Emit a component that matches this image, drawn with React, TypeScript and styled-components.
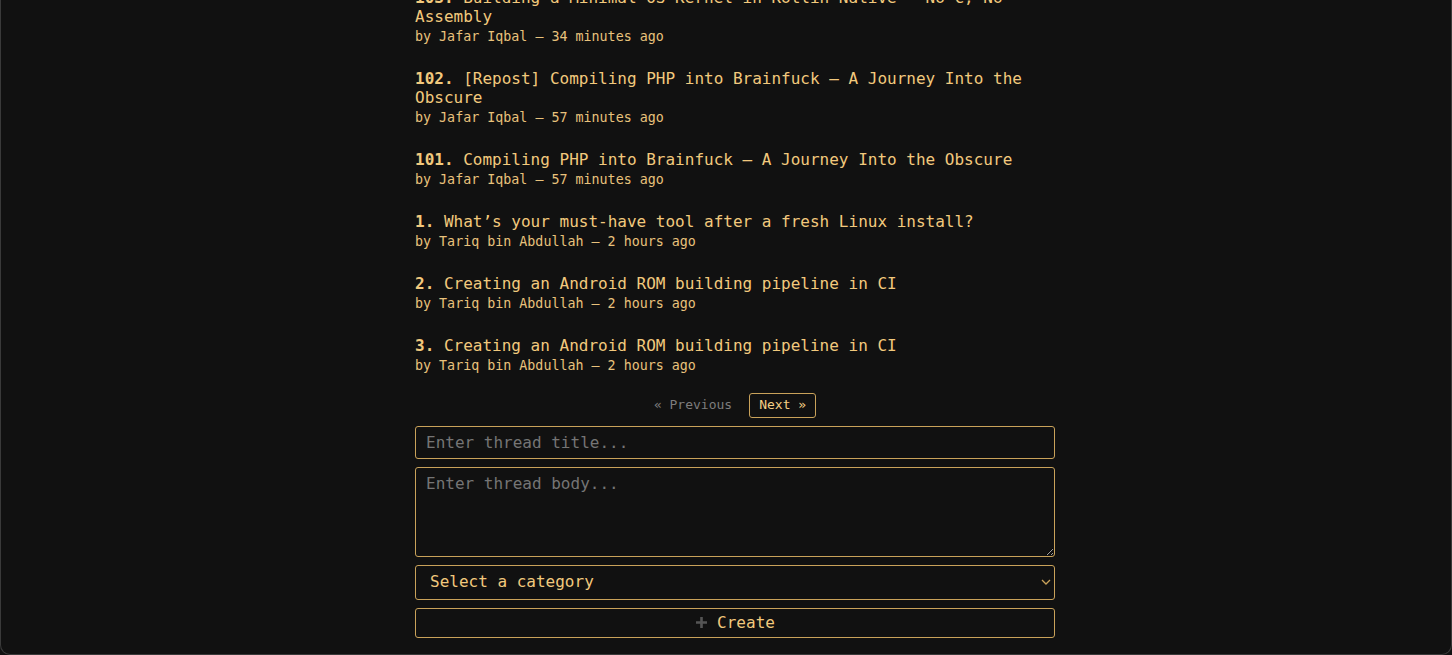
import styled, { createGlobalStyle } from 'styled-components';

const GlobalStyle = createGlobalStyle`
    html, body {
        margin:0;
        padding:0;
        background:#111111;
        color-scheme:dark;
    }
    body {
        font-family:"DejaVu Sans Mono", "Liberation Mono", monospace;
        overflow:hidden;
    }
`;

const Colors = {
    bg: '#111111',
    gold: '#f2c97d',
    meta: '#e9c27c',
    border: '#c9a25a',
    muted: '#7d7d7d',
    frame: '#3a3a3a',
};

const Frame = styled.div`
    box-sizing:border-box;
    height:655px;
    overflow:hidden;
    border:1px solid ${Colors.frame};
    border-top:none;
    border-radius:0 0 10px 10px;
    padding-left:18px;
    display:flex;
    justify-content:center;
`;

const Column = styled.main`
    width:640px;
    margin-top:-12px;
    display:flex;
    flex-direction:column;
`;

const ThreadList = styled.ul`
    list-style:none;
    margin:0;
    padding:0;
    display:flex;
    flex-direction:column;
    gap:24.4px;
`;

const Thread = styled.li`
    display:flex;
    flex-direction:column;
`;

const Title = styled.a`
    font-size:16px;
    line-height:19.2px;
    color:${Colors.gold};
    text-decoration:none;

    b{
        font-weight:bold;
    }
`;

const Meta = styled.span`
    margin-top:2.4px;
    font-size:13.33px;
    line-height:16px;
    color:${Colors.meta};
`;

const Pager = styled.nav`
    margin-top:19px;
    display:flex;
    justify-content:center;
    align-items:center;
    gap:17px;
    font-size:13px;
`;

const PagerLink = styled.span<{ $active?: boolean }>`
    line-height:15.6px;
    padding:${p => p.$active ? '3.5px 9px' : '4px 0'};
    border-radius:3px;
    border:${p => p.$active ? `1px solid ${Colors.border}` : 'none'};
    color:${p => p.$active ? '#f5cf86' : Colors.muted};
`;

const Form = styled.form`
    margin-top:8px;
    display:flex;
    flex-direction:column;
    gap:8px;
`;

const fieldBase = `
    box-sizing:border-box;
    width:100%;
    margin:0;
    background:#111111;
    border:1px solid ${Colors.border};
    border-radius:3px;
    font-family:"DejaVu Sans Mono", "Liberation Mono", monospace;
    font-size:16px;
    line-height:19.2px;
    color:${Colors.gold};
    outline:none;

    ::placeholder{
        color:${Colors.muted};
    }
`;

const TitleInput = styled.input`
    ${fieldBase}
    height:33px;
    padding:6px 10px;
`;

const BodyInput = styled.textarea`
    ${fieldBase}
    display:block;
    height:90px;
    padding:6px 10px;
    resize:vertical;
`;

const SelectWrap = styled.div`
    position:relative;
`;

const CategorySelect = styled.select`
    ${fieldBase}
    height:35px;
    padding:0 14px;
    appearance:none;
    -webkit-appearance:none;
`;

const Chevron = styled.svg`
    position:absolute;
    right:4px;
    top:13px;
    pointer-events:none;
`;

const CreateButton = styled.button`
    ${fieldBase}
    height:30px;
    padding:0;
    display:flex;
    justify-content:center;
    align-items:center;
    gap:9px;
    cursor:pointer;
`;

const threads = [
    { id: 103, title: 'Building a Minimal OS Kernel in Kotlin Native — No C, No Assembly', author: 'Jafar Iqbal', ago: '34 minutes ago' },
    { id: 102, title: '[Repost] Compiling PHP into Brainfuck — A Journey Into the Obscure', author: 'Jafar Iqbal', ago: '57 minutes ago' },
    { id: 101, title: 'Compiling PHP into Brainfuck — A Journey Into the Obscure', author: 'Jafar Iqbal', ago: '57 minutes ago' },
    { id: 1, title: 'What’s your must-have tool after a fresh Linux install?', author: 'Tariq bin Abdullah', ago: '2 hours ago' },
    { id: 2, title: 'Creating an Android ROM building pipeline in CI', author: 'Tariq bin Abdullah', ago: '2 hours ago' },
    { id: 3, title: 'Creating an Android ROM building pipeline in CI', author: 'Tariq bin Abdullah', ago: '2 hours ago' },
];

export default function App() {
    return (
        <>
            <GlobalStyle />
            <Frame>
                <Column>
                    <ThreadList>
                        {threads.map(t => (
                            <Thread key={t.id}>
                                <Title href="#"><b>{t.id}.</b> {t.title}</Title>
                                <Meta>by {t.author} — {t.ago}</Meta>
                            </Thread>
                        ))}
                    </ThreadList>

                    <Pager>
                        <PagerLink>« Previous</PagerLink>
                        <PagerLink $active>Next »</PagerLink>
                    </Pager>

                    <Form onSubmit={e => e.preventDefault()}>
                        <TitleInput placeholder="Enter thread title..." />
                        <BodyInput placeholder="Enter thread body..." />
                        <SelectWrap>
                            <CategorySelect defaultValue="">
                                <option value="">Select a category</option>
                            </CategorySelect>
                            <Chevron width="10" height="8" viewBox="0 0 10 8" fill="none">
                                <path d="M1 2 L5 6 L9 2" stroke={Colors.border} strokeWidth="1.3" />
                            </Chevron>
                        </SelectWrap>
                        <CreateButton type="submit">
                            <svg width="13" height="13" viewBox="0 0 13 13">
                                <path d="M6.5 1 V12 M1 6.5 H12" stroke="#555" strokeWidth="2.6" />
                            </svg>
                            Create
                        </CreateButton>
                    </Form>
                </Column>
            </Frame>
        </>
    );
}
